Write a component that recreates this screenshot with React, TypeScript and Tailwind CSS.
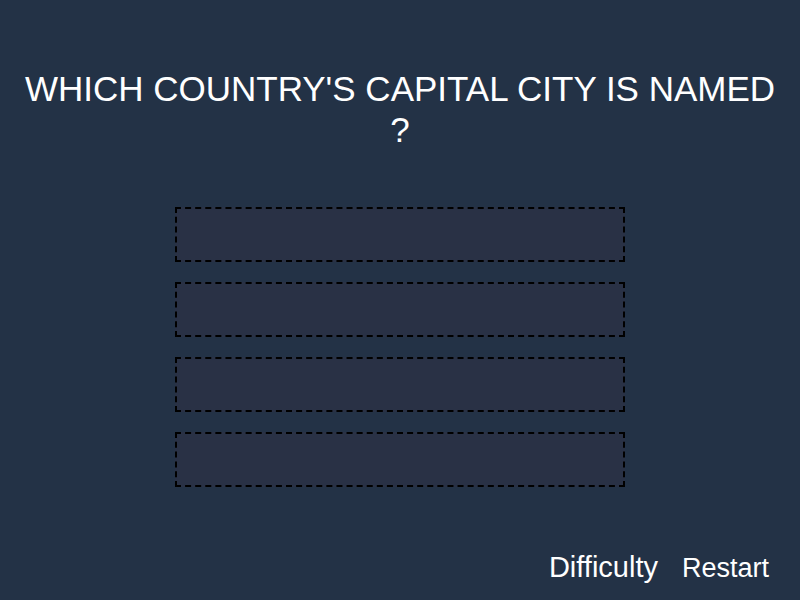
import React from "react";

const answers = ["", "", "", ""];

export default function App() {
  return (
    <div
      className="w-[800px] h-[600px] bg-[#233246] text-white flex flex-col"
      style={{ fontFamily: '"Liberation Sans", Arial, sans-serif' }}
    >
      <h1 className="pt-[68px] text-center text-[35px] leading-[41px] font-normal">
        WHICH COUNTRY'S CAPITAL CITY IS NAMED
        <br />?
      </h1>
      <div className="mt-[57px] flex flex-col items-center gap-[20px]">
        {answers.map((a, i) => (
          <button
            key={i}
            className="w-[450px] h-[55px] bg-[#293145] border-2 border-dashed border-black text-white text-[24px]"
          >
            {a}
          </button>
        ))}
      </div>
      <div className="mt-auto pb-[16px] pr-[31px] flex justify-end items-baseline gap-[24px]">
        <button className="text-[29px] leading-[33px] text-white">Difficulty</button>
        <button className="text-[27px] leading-[31px] text-white">Restart</button>
      </div>
    </div>
  );
}
